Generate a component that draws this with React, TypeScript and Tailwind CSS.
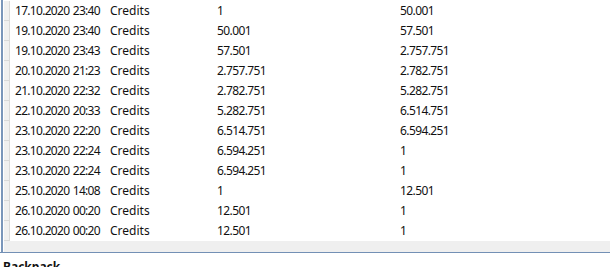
const rows: [string, string, string][] = [
  ["17.10.2020 23:40", "1", "50.001"],
  ["19.10.2020 23:40", "50.001", "57.501"],
  ["19.10.2020 23:43", "57.501", "2.757.751"],
  ["20.10.2020 21:23", "2.757.751", "2.782.751"],
  ["21.10.2020 22:32", "2.782.751", "5.282.751"],
  ["22.10.2020 20:33", "5.282.751", "6.514.751"],
  ["23.10.2020 22:20", "6.514.751", "6.594.251"],
  ["23.10.2020 22:24", "6.594.251", "1"],
  ["23.10.2020 22:24", "6.594.251", "1"],
  ["25.10.2020 14:08", "1", "12.501"],
  ["26.10.2020 00:20", "12.501", "1"],
  ["26.10.2020 00:20", "12.501", "1"],
];

export default function App() {
  return (
    <div
      className="w-[610px] h-[267px] overflow-hidden bg-white text-[12px] text-[#111]"
      style={{ fontFamily: '"Noto Sans", "Liberation Sans", sans-serif' }}
    >
      <div className="flex h-[253px] border-b border-[#7390b5] pl-[1px]">
        <div className="w-[2px] bg-[#7a96ba]" />
        <div className="flex-1 flex flex-col pl-[1px]">
          <div className="flex-1 flex flex-col pt-[1px]">
            {rows.map((r, i) => (
              <div key={i} className="flex h-[20px] items-center">
                <div className="w-[6px] h-full shrink-0 bg-[#f0f0f0] border-r border-b border-[#d9d9d9]" />
                <div className="w-[100px] shrink-0 pl-[5px] whitespace-nowrap tracking-[-0.7px] [word-spacing:1px]">{r[0]}</div>
                <div className="w-[107px] shrink-0 whitespace-nowrap">Credits</div>
                <div className="w-[183px] shrink-0 whitespace-nowrap tracking-[-0.6px]">{r[1]}</div>
                <div className="whitespace-nowrap tracking-[-0.6px]">{r[2]}</div>
              </div>
            ))}
          </div>
          <div className="h-[11px] bg-[#efefef]" />
        </div>
      </div>
      <div className="pl-[3px] pt-[7px] font-bold leading-[14px]">Backpack</div>
    </div>
  );
}
